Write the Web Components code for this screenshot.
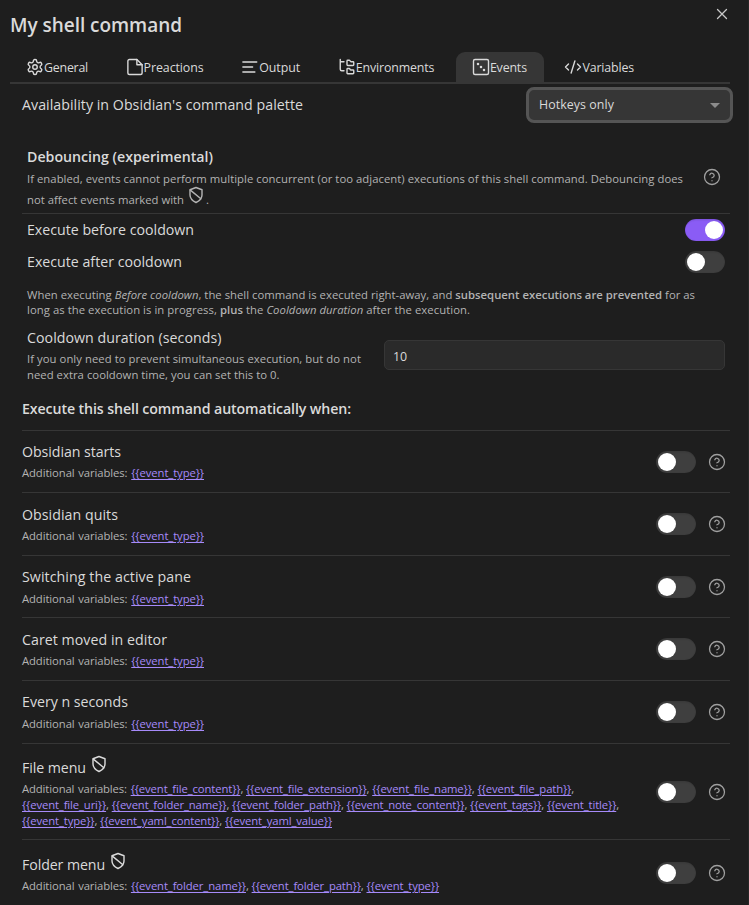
<!DOCTYPE html>
<html lang="en">
<head>
<meta charset="utf-8">
<title>My shell command</title>
<style>
html,body{margin:0;background:#1e1e1e}
body{width:749px;height:905px;overflow:hidden;font-family:"Open Sans","Noto Sans",sans-serif;color:#dadada}
a{color:#a68af9;text-decoration:underline;text-underline-offset:1.5px;text-decoration-thickness:1px}
b{font-weight:600}
</style>
</head>
<body>
<shell-modal></shell-modal>
<script>
const ICONS={
gear:'<path d="M12.22 2h-.44a2 2 0 0 0-2 2v.18a2 2 0 0 1-1 1.73l-.43.25a2 2 0 0 1-2 0l-.15-.08a2 2 0 0 0-2.73.73l-.22.38a2 2 0 0 0 .73 2.73l.15.1a2 2 0 0 1 1 1.72v.51a2 2 0 0 1-1 1.74l-.15.09a2 2 0 0 0-.73 2.73l.22.38a2 2 0 0 0 2.73.73l.15-.08a2 2 0 0 1 2 0l.43.25a2 2 0 0 1 1 1.73V20a2 2 0 0 0 2 2h.44a2 2 0 0 0 2-2v-.18a2 2 0 0 1 1-1.73l.43-.25a2 2 0 0 1 2 0l.15.08a2 2 0 0 0 2.73-.73l.22-.39a2 2 0 0 0-.73-2.73l-.15-.08a2 2 0 0 1-1-1.74v-.5a2 2 0 0 1 1-1.74l.15-.09a2 2 0 0 0 .73-2.73l-.22-.38a2 2 0 0 0-2.73-.73l-.15.08a2 2 0 0 1-2 0l-.43-.25a2 2 0 0 1-1-1.73V4a2 2 0 0 0-2-2z"/><circle cx="12" cy="12" r="3"/>',
file:'<path d="M14.5 2H4.5A2 2 0 0 0 2.5 4v16a2 2 0 0 0 2 2h15a2 2 0 0 0 2-2V9z"/><path d="M14.5 2v7h7"/>',
lines:'<path d="M2.5 5.300h18.500M2.5 12h13M2.5 18.700h16"/>',
tree:'<path d="M13 10h7a1 1 0 0 0 1-1V6a1 1 0 0 0-1-1h-2.500a1 1 0 0 1-.8-.4l-.9-1.200A1 1 0 0 0 15 3h-2a1 1 0 0 0-1 1v5a1 1 0 0 0 1 1Z"/><path d="M13 21h7a1 1 0 0 0 1-1v-3a1 1 0 0 0-1-1h-2.880a1 1 0 0 1-.9-.55l-.44-.9a1 1 0 0 0-.9-.55H13a1 1 0 0 0-1 1v5a1 1 0 0 0 1 1Z"/><path d="M3 2v13c0 1.100.9 2 2 2h3M3 5h5"/>',
dice:'<rect x="2" y="2" width="20" height="20" rx="2"/><path d="M8 8h.01M12 12h.01M16 16h.01" stroke-width="3.400"/>',
code:'<path d="m18 16 4-4-4-4M6 8l-4 4 4 4M14.500 4l-5 16"/>',
shield:'<path d="M12 22s8-4 8-10V5l-8-3-8 3v7c0 6 8 10 8 10z"/><path d="M4.500 5.500 18.500 17"/>',
help:'<circle cx="12" cy="12" r="10"/><path d="M9.090 9a3 3 0 0 1 5.830 1c0 2-3 3-3 3M12 17h.01"/>',
x:'<path d="M18 6 6 18M6 6l12 12"/>'
};
class Base extends HTMLElement{
  constructor(){super();this.attachShadow({mode:'open'});}
}
customElements.define('ui-icon',class extends Base{
  connectedCallback(){
    const s=this.getAttribute('size')||18;
    this.shadowRoot.innerHTML=`<style>:host{display:inline-block;flex:none;width:${s}px;height:${s}px}svg{display:block;width:100%;height:100%}</style><svg viewBox="0 0 24 24" fill="none" stroke="currentColor" stroke-width="${this.getAttribute('sw')||1.85}" stroke-linecap="round" stroke-linejoin="round">${ICONS[this.getAttribute('name')]}</svg>`;
  }
});
/* One line of text whose tracking is adjusted so that it spans `w` pixels. */
customElements.define('fit-line',class extends Base{
  connectedCallback(){
    this.shadowRoot.innerHTML='<style>:host{display:block;white-space:nowrap;width:max-content}</style><slot></slot>';
    requestAnimationFrame(()=>this.fit());
    document.fonts.ready.then(()=>this.fit());
  }
  fit(){
    this.style.letterSpacing='0px';
    const w=this.getBoundingClientRect().width,n=this.textContent.length;
    this.style.letterSpacing=((+this.getAttribute('w')-w)/n)+'px';
  }
});
customElements.define('ui-toggle',class extends Base{
  connectedCallback(){
    this.shadowRoot.innerHTML=`<style>:host{display:flex;align-items:center;flex:none;box-sizing:border-box;width:40px;height:22px;border-radius:11px;background:#3f3f3f;padding:0 2px;box-shadow:inset 0 4px 1px -2px rgba(0,0,0,.05),inset 0 0 1px rgba(0,0,0,.3)}:host([on]){background:#8a5cf5;justify-content:flex-end}i{width:18px;height:18px;border-radius:50%;background:#fff}</style><i></i>`;
  }
});
customElements.define('ui-tab',class extends Base{
  connectedCallback(){
    this.shadowRoot.innerHTML=`<style>:host{display:flex;align-items:center;box-sizing:border-box;height:30px;padding:0 17px 0 16px;font-size:12.4px;line-height:18px;border-radius:9px 9px 0 0}:host([active]){background:#363636}fit-line{padding-top:2px}</style><ui-icon name="${this.getAttribute('icon')}"></ui-icon><fit-line w="${this.getAttribute('w')}">${this.getAttribute('label')}</fit-line>`;
  }
});
customElements.define('event-row',class extends Base{
  connectedCallback(){
    const sh=this.hasAttribute('shield')?'<ui-icon name="shield" sw="1.9"></ui-icon>':'';
    this.shadowRoot.innerHTML=`<style>
:host{display:flex;box-sizing:border-box;height:var(--h);border-top:1px solid #363636;align-items:center;padding-right:4px}
.t{flex:1;align-self:flex-start;padding-top:var(--pt,11px)}
.n{display:flex;height:20px;font-size:14.2px;line-height:20px;color:#dadada}
.n ui-icon{margin:-3px 0 0 4px}
.d{font-size:11.300px;line-height:16px;color:#b3b3b3;padding-top:var(--dp,3px)}
ui-icon[name=help]{color:#a0a0a0;margin-left:12px}
</style><div class="t"><div class="n"><fit-line w="${this.getAttribute('w')}">${this.getAttribute('name')}</fit-line>${sh}</div><div class="d"><slot></slot></div></div><ui-toggle></ui-toggle><ui-icon name="help" sw="1.700"></ui-icon>`;
  }
});
const v=n=>`<a>{{${n}}}</a>`;
const pre='<span class="pre">Additional variables: </span>';
const one='<fit-line w="182">'+pre+v('event_type')+'</fit-line>';
customElements.define('shell-modal',class extends Base{
  connectedCallback(){
    this.shadowRoot.innerHTML=`<style>
:host{display:block;box-sizing:border-box;width:749px;height:905px;padding:0 18px 0 10px;background:#1e1e1e;border-right:1px solid #262626}
a{color:#a68af9;text-decoration:underline;text-underline-offset:1.500px;text-decoration-thickness:1px}
b{font-weight:600}
.pre{word-spacing:.9px}
header{display:flex;height:52px;box-sizing:border-box;padding-top:10px;justify-content:space-between}
header fit-line{font-size:19px;line-height:30px;font-weight:600}
header ui-icon{color:#c8c8c8;margin:-5px -1px 0 0}
nav{display:flex;gap:4.600px;border-bottom:2px solid #363636}
main{padding-left:12px}
.row{display:flex;justify-content:space-between;align-items:center}
.name{font-size:14.200px;line-height:20px}
.avail{height:42px}
.sel{display:flex;box-sizing:border-box;width:207px;height:36px;margin:0 -3px 0 0;border:3px solid #555;border-radius:8px;background:#363636;align-items:center;justify-content:space-between;padding:0 10px;font-size:12.400px;line-height:18px}
.sel i{width:0;height:0;border:5px solid transparent;border-top-color:#8c8c8c;border-bottom:0}
.box{padding:0 5px}
.desc{font-size:11.300px;line-height:16px;color:#b3b3b3}
.deb{height:88px;border-bottom:1px solid #363636;padding:0 9px 0 5px;box-sizing:border-box;align-items:flex-start}
.deb .name{font-weight:600;padding-top:21px}
.deb .desc{padding-top:4px}
.deb>ui-icon{color:#a0a0a0;margin-top:42px}
.l2{display:flex;padding-top:5px}
.l2 ui-icon{margin:-6px 1px 0 3px}
.tg{height:32px}
.exp{padding-top:9px;line-height:15px}
.cool{align-items:flex-start;padding-top:11px;height:82px;box-sizing:border-box}
.cool .desc{padding-top:3px}
.inp{box-sizing:border-box;width:341px;height:30px;border:1px solid #363636;border-radius:5px;background:#2a2a2a;padding:1px 8px 0;font-size:12.400px;line-height:29px;margin-top:12px}
h4{margin:0;padding:0 0 11px;font-size:14.200px;line-height:20px;font-weight:600}
</style>
<header><fit-line w="172">My shell command</fit-line><ui-icon name="x" sw="1.700"></ui-icon></header>
<nav>
<ui-tab icon="gear" w="44" label="General"></ui-tab>
<ui-tab icon="file" w="60" label="Preactions"></ui-tab>
<ui-tab icon="lines" w="41" label="Output"></ui-tab>
<ui-tab icon="tree" w="78.500" label="Environments"></ui-tab>
<ui-tab active icon="dice" w="37" label="Events"></ui-tab>
<ui-tab icon="code" w="51.500" label="Variables"></ui-tab>
</nav>
<main>
<div class="row avail"><fit-line class="name" w="281">Availability in Obsidian's command palette</fit-line><div class="sel"><fit-line w="75">Hotkeys only</fit-line><i></i></div></div>
<div class="row deb"><div><fit-line class="name" w="186">Debouncing (experimental)</fit-line><div class="desc"><fit-line w="656">If enabled, events cannot perform multiple concurrent (or too adjacent) executions of this shell command. Debouncing does</fit-line><div class="l2"><fit-line w="157">not affect events marked with</fit-line><ui-icon name="shield" sw="1.900"></ui-icon><span>.</span></div></div></div><ui-icon name="help" sw="1.700"></ui-icon></div>
<div class="box">
<div class="row tg"><fit-line class="name" w="167">Execute before cooldown</fit-line><ui-toggle on></ui-toggle></div>
<div class="row tg"><fit-line class="name" w="155">Execute after cooldown</fit-line><ui-toggle></ui-toggle></div>
<div class="desc exp"><fit-line w="668">When executing <em>Before cooldown</em>, the shell command is executed right-away, and <b>subsequent executions are prevented</b> for as</fit-line><fit-line w="443">long as the execution is in progress, <b>plus</b> the <em>Cooldown duration</em> after the execution.</fit-line></div>
<div class="row cool"><div><fit-line class="name" w="194.500">Cooldown duration (seconds)</fit-line><div class="desc"><fit-line w="334">If you only need to prevent simultaneous execution, but do not</fit-line><fit-line w="252.500">need extra cooldown time, you can set this to 0.</fit-line></div></div><div class="inp"><fit-line w="14">10</fit-line></div></div>
</div>
<h4><fit-line w="329">Execute this shell command automatically when:</fit-line></h4>
<event-row name="Obsidian starts" w="99" style="--h:62px">${one}</event-row>
<event-row name="Obsidian quits" w="96" style="--h:63px;--pt:12px">${one}</event-row>
<event-row name="Switching the active pane" w="169" style="--h:62px;--dp:4px">${one}</event-row>
<event-row name="Caret moved in editor" w="145" style="--h:63px;--pt:12px">${one}</event-row>
<event-row name="Every n seconds" w="106" style="--h:63px;--dp:4px">${one}</event-row>
<event-row name="File menu" w="64" shield style="--h:96px;--pt:14px">
<fit-line w="552">${pre}${['event_file_content','event_file_extension','event_file_name','event_file_path'].map(v).join(', ')},</fit-line>
<fit-line w="597">${['event_file_uri','event_folder_name','event_folder_path','event_note_content','event_tags','event_title'].map(v).join(', ')},</fit-line>
<fit-line w="310">${['event_type','event_yaml_content','event_yaml_value'].map(v).join(', ')}</fit-line></event-row>
<event-row name="Folder menu" w="83" shield style="--h:67px;--pt:15px"><fit-line w="417">${pre}${['event_folder_name','event_folder_path','event_type'].map(v).join(', ')}</fit-line></event-row>
</main>`;
  }
});
</script>
</body>
</html>
